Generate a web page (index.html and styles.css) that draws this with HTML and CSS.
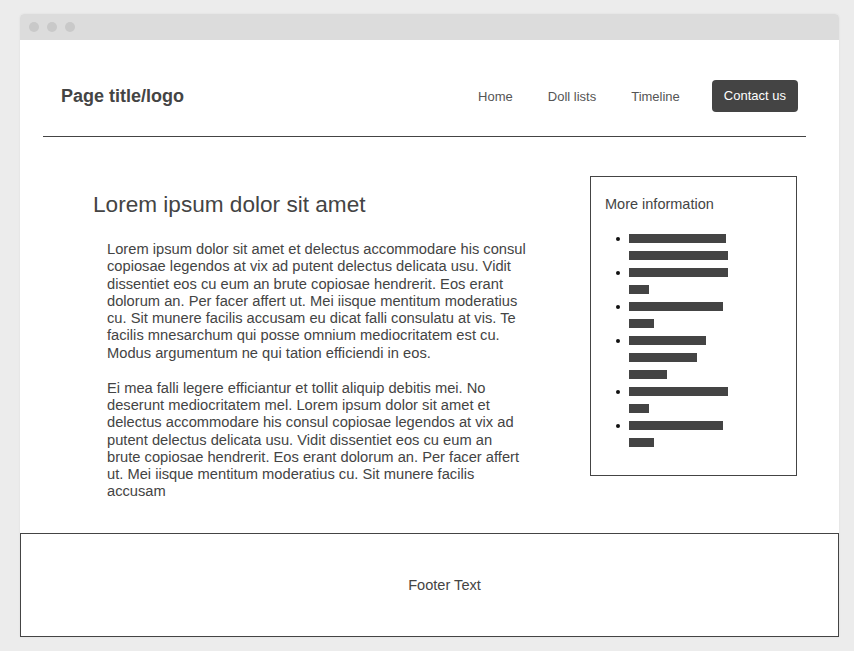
FILE: index.html
```html
<!DOCTYPE html>
<html lang="en">
<head>
<meta charset="utf-8">
<title>Page title/logo</title>
<link rel="stylesheet" href="styles.css">
</head>
<body>
<div class="window">
  <div class="titlebar">
    <span class="dot"></span><span class="dot"></span><span class="dot"></span>
  </div>
  <header class="header">
    <div class="logo">Page title/logo</div>
    <nav class="nav">
      <a class="nav-link" href="#">Home</a>
      <a class="nav-link" href="#">Doll lists</a>
      <a class="nav-link" href="#">Timeline</a>
      <a class="nav-button" href="#">Contact us</a>
    </nav>
  </header>
  <div class="rule"></div>
  <main class="main">
    <article class="article">
      <h1 class="heading">Lorem ipsum dolor sit amet</h1>
      <p class="para">Lorem ipsum dolor sit amet et delectus accommodare his consul copiosae legendos at vix ad putent delectus delicata usu. Vidit dissentiet eos cu eum an brute copiosae hendrerit. Eos erant dolorum an. Per facer affert ut. Mei iisque mentitum moderatius cu. Sit munere facilis accusam eu dicat falli consulatu at vis. Te facilis mnesarchum qui posse omnium mediocritatem est cu. Modus argumentum ne qui tation efficiendi in eos.</p>
      <p class="para">Ei mea falli legere efficiantur et tollit aliquip debitis mei. No deserunt mediocritatem mel. Lorem ipsum dolor sit amet et delectus accommodare his consul copiosae legendos at vix ad putent delectus delicata usu. Vidit dissentiet eos cu eum an brute copiosae hendrerit. Eos erant dolorum an. Per facer affert ut. Mei iisque mentitum moderatius cu. Sit munere facilis accusam</p>
    </article>
    <aside class="sidebar">
      <h2 class="side-title">More information</h2>
      <ul class="list">
        <li class="item"><span class="bullet"></span><div class="bars"><span class="bar" style="width:97px"></span><span class="bar" style="width:99px"></span></div></li>
        <li class="item"><span class="bullet"></span><div class="bars"><span class="bar" style="width:99px"></span><span class="bar" style="width:20px"></span></div></li>
        <li class="item"><span class="bullet"></span><div class="bars"><span class="bar" style="width:94px"></span><span class="bar" style="width:25px"></span></div></li>
        <li class="item"><span class="bullet"></span><div class="bars"><span class="bar" style="width:77px"></span><span class="bar" style="width:68px"></span><span class="bar" style="width:38px"></span></div></li>
        <li class="item"><span class="bullet"></span><div class="bars"><span class="bar" style="width:99px"></span><span class="bar" style="width:20px"></span></div></li>
        <li class="item"><span class="bullet"></span><div class="bars"><span class="bar" style="width:94px"></span><span class="bar" style="width:25px"></span></div></li>
      </ul>
    </aside>
  </main>
  <footer class="footer">Footer Text</footer>
</div>
</body>
</html>
```

FILE: styles.css
```css
* { box-sizing: border-box; }
html, body { margin: 0; padding: 0; }
body {
  background: #ececec;
  font-family: "Liberation Sans", Arial, sans-serif;
  color: #444;
  height: 651px;
  overflow: hidden;
}
.window {
  width: 819px;
  margin: 14px 0 0 20px;
  background: #fff;
  border-radius: 4px 4px 0 0;
  box-shadow: 0 0 2px rgba(0,0,0,0.08);
}
.titlebar {
  height: 26px;
  background: #dcdcdc;
  border-radius: 4px 4px 0 0;
  display: flex;
  align-items: center;
  gap: 8px;
  padding-left: 9px;
}
.dot {
  width: 10px;
  height: 10px;
  border-radius: 50%;
  background: #c9c9c9;
}
.header {
  display: flex;
  justify-content: space-between;
  align-items: center;
  padding: 40px 41px 24px 41px;
}
.logo {
  font-size: 18px;
  font-weight: bold;
  color: #444;
}
.nav {
  display: flex;
  align-items: center;
  gap: 35px;
}
.nav-link {
  font-size: 13px;
  color: #555;
  text-decoration: none;
}
.nav-button {
  margin-left: -3px;
  font-size: 13px;
  color: #fff;
  background: #444;
  text-decoration: none;
  height: 32px;
  line-height: 32px;
  padding: 0 12px;
  border-radius: 4px;
}
.rule {
  height: 1px;
  background: #444;
  margin-left: 23px;
  width: 763px;
}
.main {
  display: flex;
  align-items: flex-start;
  justify-content: space-between;
  padding: 39px 42px 0 73px;
  height: 396px;
}
.article {
  width: 462px;
}
.heading {
  margin: 16px 0 24px 0;
  font-size: 22.6px;
  font-weight: normal;
  color: #444;
  line-height: 25px;
}
.para {
  margin: 0 0 18px 14px;
  width: 421px;
  font-size: 14.7px;
  line-height: 17.25px;
  color: #444;
}
.sidebar {
  width: 207px;
  height: 300px;
  border: 1px solid #444;
  padding: 19px 14px 0 14px;
}
.side-title {
  margin: 0;
  font-size: 14.5px;
  font-weight: normal;
  color: #444;
  line-height: 16px;
}
.list {
  list-style: none;
  margin: 22px 0 0 0;
  padding: 0 0 0 11px;
  display: flex;
  flex-direction: column;
  gap: 8px;
}
.item {
  display: flex;
  align-items: flex-start;
  gap: 9px;
}
.bullet {
  width: 4px;
  height: 4px;
  border-radius: 50%;
  background: #111;
  margin-top: 2.5px;
  flex: none;
}
.bars {
  display: flex;
  flex-direction: column;
  gap: 8px;
}
.bar {
  display: block;
  height: 9px;
  background: #444;
}
.footer {
  height: 104px;
  border: 1px solid #444;
  display: flex;
  align-items: center;
  justify-content: center;
  padding-left: 30px;
  font-size: 14.6px;
  color: #444;
}
```
